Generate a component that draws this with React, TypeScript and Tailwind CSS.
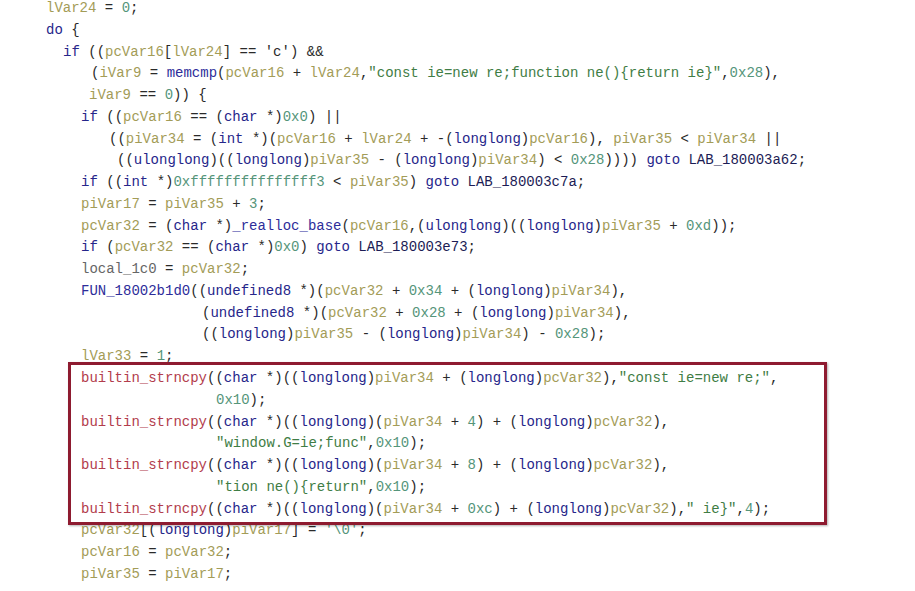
import React from 'react';

// decompiler listing, one entry per line: [indent class, source text]
const lines: [string, string][] = [
  ['pl-[46px]', 'lVar24 = 0;'],
  ['pl-[46px]', 'do {'],
  ['pl-[63px]', "if ((pcVar16[lVar24] == 'c') &&"],
  ['pl-[91px]', '(iVar9 = memcmp(pcVar16 + lVar24,"const ie=new re;function ne(){return ie}",0x28),'],
  ['pl-[89px]', 'iVar9 == 0)) {'],
  ['pl-[81px]', 'if ((pcVar16 == (char *)0x0) ||'],
  ['pl-[109px]', '((piVar34 = (int *)(pcVar16 + lVar24 + -(longlong)pcVar16), piVar35 < piVar34 ||'],
  ['pl-[117px]', '((ulonglong)((longlong)piVar35 - (longlong)piVar34) < 0x28)))) goto LAB_180003a62;'],
  ['pl-[81px]', 'if ((int *)0xfffffffffffffff3 < piVar35) goto LAB_180003c7a;'],
  ['pl-[81px]', 'piVar17 = piVar35 + 3;'],
  ['pl-[81px]', 'pcVar32 = (char *)_realloc_base(pcVar16,(ulonglong)((longlong)piVar35 + 0xd));'],
  ['pl-[81px]', 'if (pcVar32 == (char *)0x0) goto LAB_180003e73;'],
  ['pl-[81px]', 'local_1c0 = pcVar32;'],
  ['pl-[81px]', 'FUN_18002b1d0((undefined8 *)(pcVar32 + 0x34 + (longlong)piVar34),'],
  ['pl-[202px]', '(undefined8 *)(pcVar32 + 0x28 + (longlong)piVar34),'],
  ['pl-[202px]', '((longlong)piVar35 - (longlong)piVar34) - 0x28);'],
  ['pl-[81px]', 'lVar33 = 1;'],
  ['pl-[81px]', 'builtin_strncpy((char *)((longlong)piVar34 + (longlong)pcVar32),"const ie=new re;",'],
  ['pl-[216px]', '0x10);'],
  ['pl-[81px]', 'builtin_strncpy((char *)((longlong)(piVar34 + 4) + (longlong)pcVar32),'],
  ['pl-[216px]', '"window.G=ie;func",0x10);'],
  ['pl-[81px]', 'builtin_strncpy((char *)((longlong)(piVar34 + 8) + (longlong)pcVar32),'],
  ['pl-[216px]', '"tion ne(){return",0x10);'],
  ['pl-[81px]', 'builtin_strncpy((char *)((longlong)(piVar34 + 0xc) + (longlong)pcVar32)," ie}",4);'],
  ['pl-[81px]', "pcVar32[(longlong)piVar17] = '\\0';"],
  ['pl-[81px]', 'pcVar16 = pcVar32;'],
  ['pl-[81px]', 'piVar35 = piVar17;'],
];

const colors: Record<string, string> = {
  kw: 'text-[#26268a]',
  var: 'text-[#a39c57]',
  num: 'text-[#55957a]',
  str: 'text-[#3f7d45]',
  fn: 'text-[#2d2d9a]',
  red: 'text-[#b23c4c]',
  lab: 'text-[#1c1c55]',
  glob: 'text-[#666666]',
  plain: 'text-[#2a2a2a]',
};

const keywords = ['do', 'if', 'goto', 'char', 'int', 'longlong', 'ulonglong', 'undefined8'];

const kindOf = (t: string) => {
  if (t.startsWith('"')) return 'str';
  if (t.startsWith("'")) return t === "'\\0'" ? 'num' : 'plain';
  if (/^(0x[0-9a-f]+|\d+)$/.test(t)) return 'num';
  if (keywords.includes(t)) return 'kw';
  if (t === 'builtin_strncpy') return 'red';
  if (t === 'memcmp' || t === '_realloc_base' || t.startsWith('FUN_')) return 'fn';
  if (t.startsWith('LAB_')) return 'lab';
  if (t === 'local_1c0') return 'glob';
  if (/^[a-z]+Var\d+$/.test(t)) return 'var';
  return 'plain';
};

const Line = ({ text }: { text: string }) => {
  const tokens = text.match(/("[^"]*"|'[^']*'|0x[0-9a-f]+|\d+|[A-Za-z_][A-Za-z0-9_]*|\s+|.)/g) || [];
  return (
    <>
      {tokens.map((t, i) => (
        <span key={i} className={colors[kindOf(t)]}>{t}</span>
      ))}
    </>
  );
};

const App = () => {
  return (
    <div className="relative w-[915px] h-[591px] overflow-hidden bg-white font-['Liberation_Mono',monospace] text-[14px] leading-[21.77px]">
      <div className="mt-[-2px] flex flex-col">
        {lines.map(([pad, text], i) => (
          <div key={i} className={`whitespace-pre ${pad}`}>
            <Line text={text} />
          </div>
        ))}
      </div>
      <div className="absolute left-[68px] top-[362px] w-[759px] h-[163px] border-[3px] border-[#8e1b30] shadow-[1px_1px_2px_rgba(0,0,0,0.3)]" />
    </div>
  );
};

export default App;
